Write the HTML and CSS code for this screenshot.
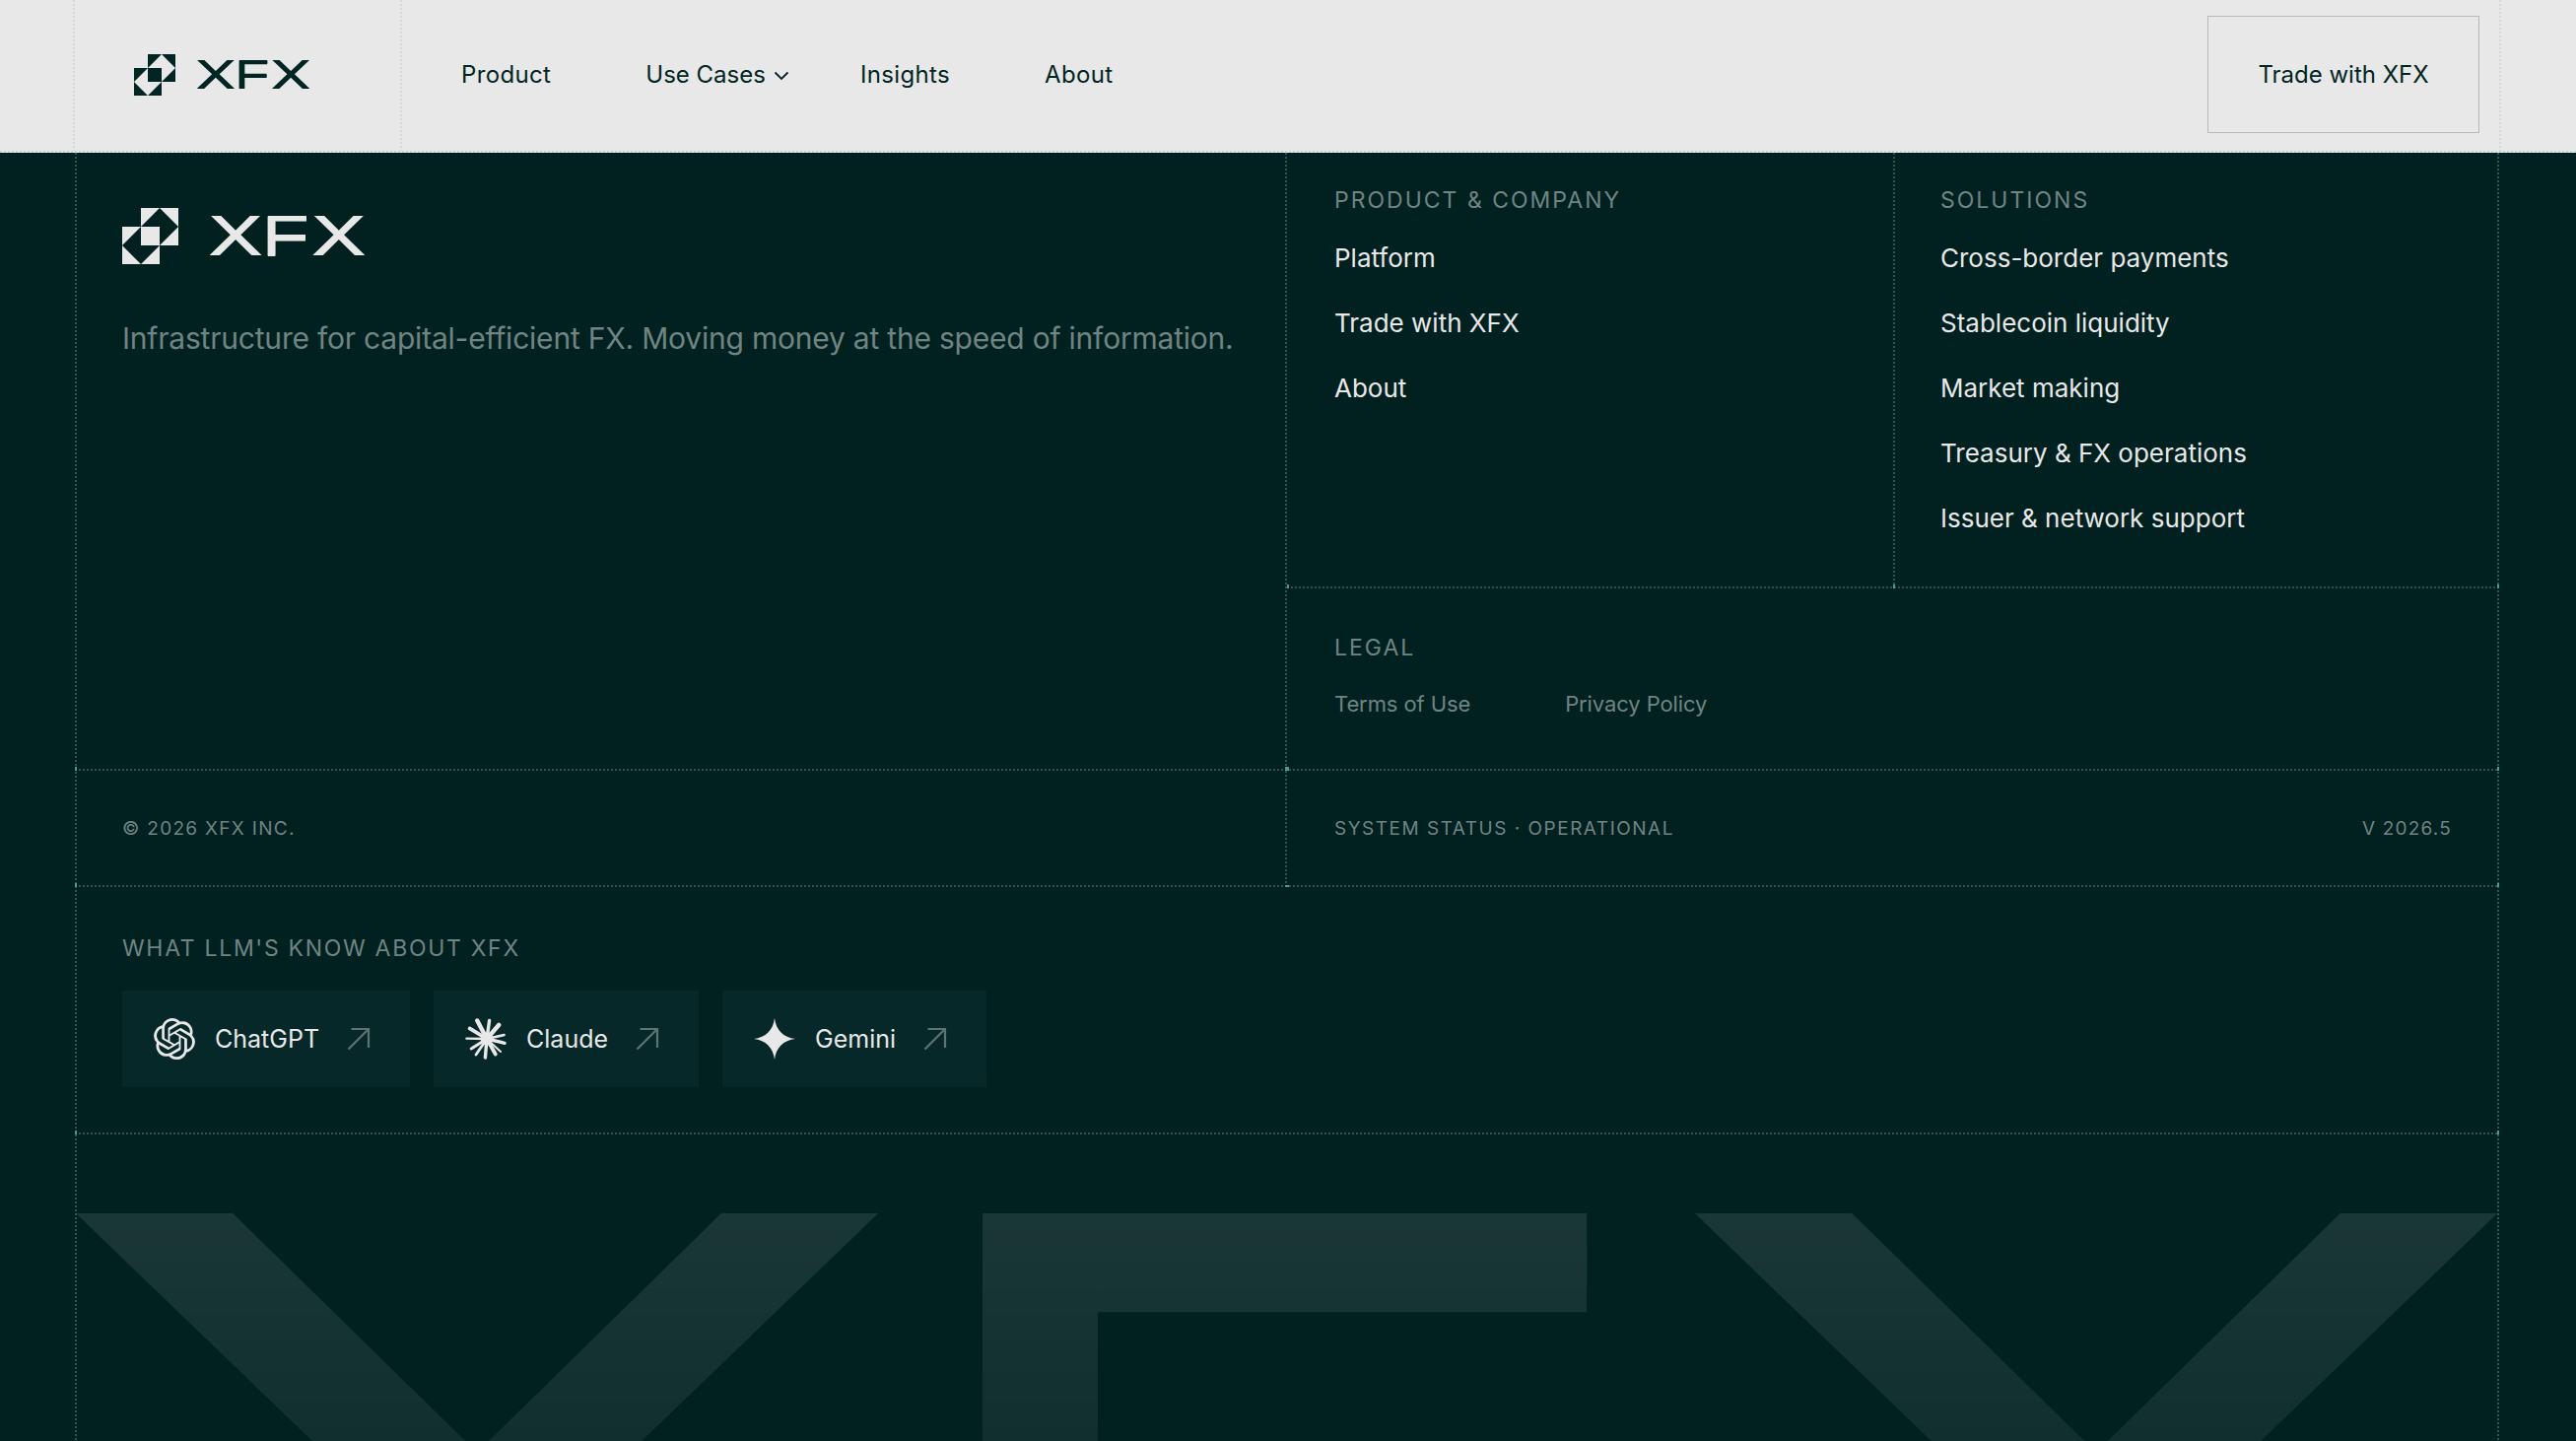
FILE: index.html
```
<!DOCTYPE html>
<html lang="en">
<head>
    <meta charset="UTF-8">
    <meta name="viewport" content="width=device-width, initial-scale=1.0">
    <title>XFX</title>
    <link rel="stylesheet" href="styles.css">
</head>
<body>
    <!-- Shared symbols -->
    <svg class="symbols" width="0" height="0" aria-hidden="true">
        <symbol id="mark" viewBox="0 0 3 3">
            <path d="M1 0h1L1 1zM2 0h1v1zM3 1v1H2zM0 1h1L0 2zM0 2v1h1zM2 2v1H1zM1 1h1v1H1z" />
        </symbol>
        <symbol id="arrow" viewBox="0 0 24 24">
            <path d="M4.5 2H22v19M22 2L1.5 22.5" fill="none" stroke="currentColor" stroke-width="2.2" />
        </symbol>
        <!-- Makes the horizontal bars of the F heavier -->
        <filter id="heavy" x="0" y="0" width="1" height="1.1">
            <feOffset dy="33" result="low" />
            <feMerge>
                <feMergeNode in="low" />
                <feMergeNode in="SourceGraphic" />
            </feMerge>
        </filter>
    </svg>

    <header class="header">
        <div class="header-inner">
            <a class="header-logo">
                <svg class="mark-sm"><use href="#mark" /></svg>
                <svg class="word-sm" viewBox="0 0 2458 633">
                    <text class="wm-x" transform="translate(-48.9 633) scale(1.45 .8903)">X</text>
                    <text class="wm-f" transform="translate(817.1 633) scale(1.2546 .92)">F</text>
                    <text class="wm-x" transform="translate(1594.1 633) scale(1.45 .8903)">X</text>
                </svg>
            </a>
            <nav class="nav">
                <a>Product</a>
                <a class="has-menu">Use Cases<svg class="chevron" viewBox="0 0 16 10"><path d="M1.5 1.5L8 8l6.5-6.5" fill="none" stroke="currentColor" stroke-width="1.8" /></svg></a>
                <a>Insights</a>
                <a>About</a>
            </nav>
            <a class="trade-btn">Trade with XFX</a>
        </div>
    </header>

    <footer class="footer">
        <div class="row">
            <div class="brand">
                <div class="brand-logo">
                    <svg class="mark-lg"><use href="#mark" /></svg>
                    <svg class="word-lg" viewBox="0 0 2458 633">
                        <text class="wm-x" transform="translate(-48.9 633) scale(1.45 .8903)">X</text>
                        <text class="wm-f" transform="translate(817.1 633) scale(1.2546 .92)">F</text>
                        <text class="wm-x" transform="translate(1594.1 633) scale(1.45 .8903)">X</text>
                    </svg>
                </div>
                <p class="tagline">Infrastructure for capital-efficient FX. Moving money at the speed of information.</p>
                <i class="joint bl"></i>
            </div>
            <div class="side">
                <div class="columns">
                    <div class="column">
                        <h3>Product &amp; Company</h3>
                        <ul>
                            <li>Platform</li>
                            <li>Trade with XFX</li>
                            <li>About</li>
                        </ul>
                    </div>
                    <div class="column column-line">
                        <h3>Solutions</h3>
                        <ul>
                            <li>Cross-border payments</li>
                            <li>Stablecoin liquidity</li>
                            <li>Market making</li>
                            <li>Treasury &amp; FX operations</li>
                            <li>Issuer &amp; network support</li>
                        </ul>
                        <i class="joint bl"></i>
                    </div>
                    <i class="joint bl inset"></i>
                    <i class="joint br"></i>
                </div>
                <div class="legal">
                    <h3>Legal</h3>
                    <div class="legal-links">
                        <a>Terms of Use</a>
                        <a>Privacy Policy</a>
                    </div>
                </div>
                <i class="joint bl wide"></i>
                <i class="joint br"></i>
            </div>
        </div>

        <div class="row meta">
            <div class="meta-left">© 2026 XFX Inc.<i class="joint bl"></i></div>
            <div class="meta-right">
                <span>System status · Operational</span>
                <span class="version">V 2026.5</span>
                <i class="joint bl flat"></i>
                <i class="joint br"></i>
            </div>
        </div>

        <div class="llm">
            <h3>What LLM's know about XFX</h3>
            <div class="cards">
                <a class="card">
                    <svg class="card-icon" viewBox="0 0 24 24"><path d="M22.2819 9.8211a5.9847 5.9847 0 0 0-.5157-4.9108 6.0462 6.0462 0 0 0-6.5098-2.9A6.0651 6.0651 0 0 0 4.9807 4.1818a5.9847 5.9847 0 0 0-3.9977 2.9 6.0462 6.0462 0 0 0 .7427 7.0966 5.98 5.98 0 0 0 .511 4.9107 6.051 6.051 0 0 0 6.5146 2.9001A5.9847 5.9847 0 0 0 13.2599 24a6.0557 6.0557 0 0 0 5.7718-4.2058 5.9894 5.9894 0 0 0 3.9977-2.9001 6.0557 6.0557 0 0 0-.7475-7.0729zm-9.022 12.6081a4.4755 4.4755 0 0 1-2.8764-1.0408l.1419-.0804 4.7783-2.7582a.7948.7948 0 0 0 .3927-.6813v-6.7369l2.02 1.1686a.071.071 0 0 1 .038.052v5.5826a4.504 4.504 0 0 1-4.4945 4.4944zm-9.6607-4.1254a4.4708 4.4708 0 0 1-.5346-3.0137l.142.0852 4.783 2.7582a.7712.7712 0 0 0 .7806 0l5.8428-3.3685v2.3324a.0804.0804 0 0 1-.0332.0615L9.74 19.9502a4.4992 4.4992 0 0 1-6.1408-1.6464zM2.3408 7.8956a4.485 4.485 0 0 1 2.3655-1.9728V11.6a.7664.7664 0 0 0 .3879.6765l5.8144 3.3543-2.0201 1.1685a.0757.0757 0 0 1-.071 0l-4.8303-2.7865A4.504 4.504 0 0 1 2.3408 7.872zm16.5963 3.8558L13.1038 8.364 15.1192 7.2a.0757.0757 0 0 1 .071 0l4.8303 2.7913a4.4944 4.4944 0 0 1-.6765 8.1042v-5.6772a.79.79 0 0 0-.407-.667zm2.0107-3.0231l-.142-.0852-4.7735-2.7818a.7759.7759 0 0 0-.7854 0L9.409 9.2297V6.8974a.0662.0662 0 0 1 .0284-.0615l4.8303-2.7866a4.4992 4.4992 0 0 1 6.6802 4.66zM8.3065 12.863l-2.02-1.1638a.0804.0804 0 0 1-.038-.0567V6.0742a4.4992 4.4992 0 0 1 7.3757-3.4537l-.142.0805L8.704 5.459a.7948.7948 0 0 0-.3927.6813zm1.0976-2.3654l2.602-1.4998 2.6069 1.4998v2.9994l-2.5974 1.4997-2.6067-1.4997Z" /></svg>
                    <span>ChatGPT</span>
                    <svg class="card-arrow"><use href="#arrow" /></svg>
                </a>
                <a class="card">
                    <svg class="card-icon" viewBox="0 0 42 42">
                        <g fill="none" stroke="currentColor" stroke-linecap="round">
                            <path d="M22 21L12.3 2.5" stroke-width="4.4" />
                            <path d="M22 21L24.6 2.4" stroke-width="3.4" />
                            <path d="M22 21L34.3 6.8" stroke-width="4.4" />
                            <path d="M22 21L39.5 17" stroke-width="2.6" />
                            <path d="M22 21L40 25.3" stroke-width="3.4" />
                            <path d="M22 21L36 34" stroke-width="2" />
                            <path d="M22 21L30.8 36.5" stroke-width="3.8" />
                            <path d="M22 21L20.4 40" stroke-width="3.4" />
                            <path d="M22 21L11 37" stroke-width="2.8" />
                            <path d="M22 21L6.2 31" stroke-width="3" />
                            <path d="M22 21L1.4 20.6" stroke-width="2.4" />
                            <path d="M22 21L4.6 10.4" stroke-width="3.8" />
                        </g>
                        <circle cx="22" cy="21" r="6.4" />
                    </svg>
                    <span>Claude</span>
                    <svg class="card-arrow"><use href="#arrow" /></svg>
                </a>
                <a class="card">
                    <svg class="card-icon" viewBox="0 0 42 42"><path d="M21 0C22.4 12 30 19.6 42 21 30 22.4 22.4 30 21 42 19.6 30 12 22.4 0 21 12 19.6 19.6 12 21 0z" /></svg>
                    <span>Gemini</span>
                    <svg class="card-arrow"><use href="#arrow" /></svg>
                </a>
            </div>
            <i class="joint bl"></i>
            <i class="joint br"></i>
        </div>

        <div class="watermark">
            <svg viewBox="0 0 2458 231">
                <text class="wm-x" transform="translate(-48.9 633) scale(1.45 .8903)">X</text>
                <text class="wm-f" transform="translate(817.1 633) scale(1.2546 .92)">F</text>
                <text class="wm-x" transform="translate(1594.1 633) scale(1.45 .8903)">X</text>
            </svg>
        </div>
    </footer>
</body>
</html>
```
FILE: styles.css
```
:root {
    --dark: #002120;
    --light: #e8e8e8;
    --muted: #708483;
}
* {
    box-sizing: border-box;
}
html {
    overflow: hidden;
}
body {
    margin: 0;
    height: 1462px;
    overflow: hidden;
    background: var(--dark);
    color: var(--light);
    font-family: Inter, "Liberation Sans", sans-serif;
    display: flex;
    flex-direction: column;
}
svg {
    display: block;
    flex: none;
    fill: currentColor;
}
.symbols {
    position: absolute;
}
.wm-x {
    font: 430 1000px Roboto, sans-serif;
}
.wm-f {
    font: 400 1000px "Liberation Sans", sans-serif;
    filter: url(#heavy);
}
.header,
.header-inner,
.footer {
    --dots-v: repeating-linear-gradient(to bottom, var(--dot) 0 2px, transparent 2px 4px);
    --dots-h: repeating-linear-gradient(to right, var(--dot) 0 2px, transparent 2px 4px);
}

/* Header */
.header {
    --dot: #bfdad4;
    flex: none;
    height: 155px;
    padding: 0 76px 2px 74px;
    background: var(--dots-h) left bottom / 100% 2px no-repeat, var(--light);
    color: #002523;
}
.header-inner {
    --dot: #cfdcd9;
    display: flex;
    align-items: center;
    height: 153px;
    padding: 0 22px 2px 0;
    background: var(--dots-v) left top / 2px 100% no-repeat,
                var(--dots-v) 332px top / 2px 100% no-repeat,
                var(--dots-v) right top / 2px 100% no-repeat;
}
.header-logo {
    display: flex;
    align-items: center;
    gap: 22px;
    width: 334px;
    padding-left: 62px;
}
.mark-sm {
    width: 42px;
    height: 42px;
}
.word-sm {
    width: 114px;
    height: 29.4px;
}
.nav {
    display: flex;
    gap: 96px;
    flex: 1;
    padding-left: 60px;
    font-size: 24px;
    line-height: 30px;
    letter-spacing: 0.35px;
}
.nav a {
    display: flex;
    align-items: center;
}
.nav .has-menu {
    letter-spacing: 0;
}
.chevron {
    width: 16px;
    height: 10px;
    margin: 2px -24px 0 8px;
}
.trade-btn {
    display: flex;
    align-items: center;
    justify-content: center;
    width: 276px;
    height: 119px;
    border: 1px solid #b6b9b9;
    font-size: 24px;
}

/* Footer */
.footer {
    --dot: #35514f;
    flex: 1;
    display: flex;
    flex-direction: column;
    margin: 0 78px 0 76px;
    background: var(--dots-v) left top / 2px 100% no-repeat,
                var(--dots-v) right top / 2px 100% no-repeat;
}
.row {
    display: flex;
    background: var(--dots-h) left bottom / 100% 2px no-repeat;
}
h3 {
    margin: 0;
    font-size: 23px;
    line-height: 28px;
    font-weight: 400;
    letter-spacing: 2px;
    text-transform: uppercase;
    color: var(--muted);
}
.brand {
    position: relative;
    flex: none;
    width: 1228px;
    height: 627px;
    padding: 56px 0 0 48px;
}
.brand-logo {
    display: flex;
    align-items: center;
    gap: 32px;
}
.mark-lg {
    width: 57px;
    height: 57px;
}
.word-lg {
    width: 157px;
    height: 40.4px;
}
.tagline {
    margin: 56px 0 0;
    font-size: 30px;
    line-height: 38px;
    letter-spacing: -0.21px;
    white-space: nowrap;
    color: var(--muted);
}
.side {
    position: relative;
    flex: 1;
    background: var(--dots-v) left top / 2px 100% no-repeat;
}
.columns {
    position: relative;
    display: flex;
    height: 442px;
    background: var(--dots-h) 2px bottom / 100% 2px no-repeat;
}
.column {
    position: relative;
    flex: none;
    width: 617px;
    padding: 34px 0 0 50px;
}
.column-line {
    width: 615px;
    padding-left: 48px;
    background: var(--dots-v) left top / 2px 100% no-repeat;
}
.column ul {
    display: flex;
    flex-direction: column;
    gap: 34px;
    margin: 29px 0 0;
    padding: 0;
    list-style: none;
    font-size: 26px;
    line-height: 32px;
}
.legal {
    padding: 46px 0 0 50px;
}
.legal-links {
    display: flex;
    gap: 96px;
    margin-top: 29px;
    font-size: 22px;
    line-height: 28px;
    letter-spacing: -0.1px;
    color: var(--muted);
}

/* Meta row */
.meta {
    height: 118px;
    font-size: 19px;
    letter-spacing: 1.5px;
    text-transform: uppercase;
    color: var(--muted);
}
.meta-left {
    position: relative;
    display: flex;
    align-items: center;
    width: 1228px;
    padding: 0 0 2px 48px;
    letter-spacing: 1.3px;
}
.meta-right {
    position: relative;
    display: flex;
    align-items: center;
    justify-content: space-between;
    flex: 1;
    padding: 0 48px 2px 50px;
    background: var(--dots-v) left top / 2px 100% no-repeat;
}
.version {
    letter-spacing: 1.2px;
}

/* LLM cards */
.llm {
    position: relative;
    height: 251px;
    padding: 48px 0 0 48px;
    background: var(--dots-h) left bottom / 100% 2px no-repeat;
}
.llm h3 {
    letter-spacing: 1.7px;
}
.cards {
    display: flex;
    gap: 24px;
    margin-top: 29px;
}
.card {
    display: flex;
    align-items: center;
    height: 98px;
    padding: 0 40px 0 32px;
    background: #072829;
    font-size: 25px;
}
.card-icon {
    width: 42px;
    height: 42px;
    margin-right: 20px;
}
.card-arrow {
    width: 24px;
    height: 24px;
    margin-left: 28px;
    color: #5d7473;
}

/* Accent where two dotted lines meet */
.joint {
    position: absolute;
    bottom: 0;
    width: 2px;
    height: 4px;
    background: #4d9a8d;
}
.bl {
    left: 0;
}
.br {
    right: 0;
}
.inset {
    left: 2px;
}
.wide {
    width: 4px;
}
.flat {
    width: 4px;
    height: 2px;
}

.watermark {
    flex: 1;
    min-height: 0;
    overflow: hidden;
    padding: 80px 1px 0;
}
.watermark svg {
    width: 2458px;
    height: 231px;
    opacity: 0.108;
    -webkit-mask-image: linear-gradient(#000, rgba(0, 0, 0, 0.64));
    mask-image: linear-gradient(#000, rgba(0, 0, 0, 0.64));
}
```
